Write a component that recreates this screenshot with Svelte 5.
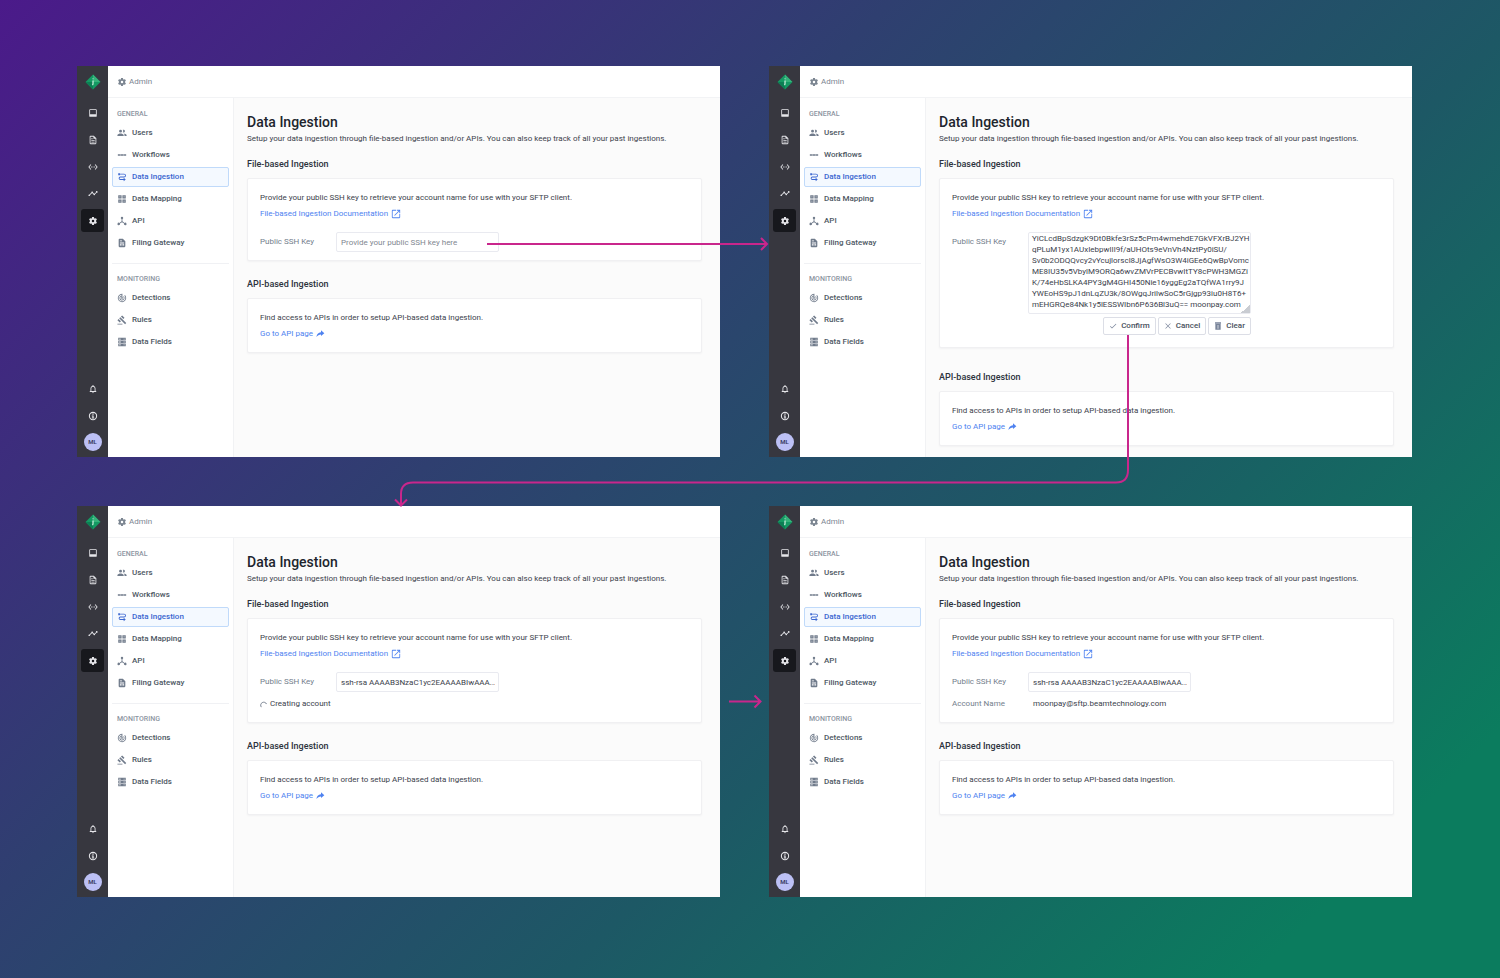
<script>
  const icons = {
    gear: "M19.14 12.94c.04-.3.06-.61.06-.94 0-.32-.02-.64-.07-.94l2.03-1.58a.49.49 0 0 0 .12-.61l-1.92-3.32a.488.488 0 0 0-.59-.22l-2.39.96c-.5-.38-1.03-.7-1.62-.94l-.36-2.54a.484.484 0 0 0-.48-.41h-3.84c-.24 0-.43.17-.47.41l-.36 2.54c-.59.24-1.13.57-1.62.94l-2.39-.96c-.22-.08-.47 0-.59.22L2.74 8.87c-.12.21-.08.47.12.61l2.03 1.58c-.05.3-.09.63-.09.94s.02.64.07.94l-2.03 1.58a.49.49 0 0 0-.12.61l1.92 3.32c.12.22.37.29.59.22l2.39-.96c.5.38 1.03.7 1.62.94l.36 2.54c.05.24.24.41.48.41h3.84c.24 0 .44-.17.47-.41l.36-2.54c.59-.24 1.13-.56 1.62-.94l2.39.96c.22.08.47 0 .59-.22l1.92-3.32c.12-.22.07-.47-.12-.61zM12 15a3 3 0 1 1 0-6 3 3 0 0 1 0 6z",
    inbox:
      "M5 3h14a2 2 0 0 1 2 2v14a2 2 0 0 1-2 2H5a2 2 0 0 1-2-2V5a2 2 0 0 1 2-2zm0 2v10h14V5z",
    file: "M14 2H6a2 2 0 0 0-2 2v16a2 2 0 0 0 2 2h12a2 2 0 0 0 2-2V8zM18 20H6V4h7v5h5zM8 8h3v2H8zM8 12h8v2H8zm0 4h8v2H8z",
    code: "M7.77 6.76 6.23 5.48.82 12l5.41 6.52 1.54-1.28L3.42 12zM7 13h2v-2H7zm10-2h-2v2h2zm-6 2h2v-2h-2zm6.77-7.52-1.54 1.28L20.58 12l-4.35 5.24 1.54 1.28L23.18 12z",
    trend:
      "M23 7a2 2 0 0 1-2.5 1.9l-3.6 3.6a2 2 0 1 1-3.8 0l-2.6-2.6a2 2 0 0 1-1 0L5 14.5a2 2 0 1 1-1.4-1.4l4.5-4.6a2 2 0 1 1 3.8 0l2.6 2.6a2 2 0 0 1 1 0l3.6-3.6A2 2 0 1 1 23 7z",
    bell: "M12 22c1.1 0 2-.9 2-2h-4c0 1.1.9 2 2 2zm6-6v-5c0-3.07-1.63-5.64-4.5-6.32V4c0-.83-.67-1.5-1.5-1.5s-1.5.67-1.5 1.5v.68C7.64 5.36 6 7.92 6 11v5l-2 2v1h16v-1zm-2 1H8v-6c0-2.48 1.51-4.5 4-4.5s4 2.02 4 4.5z",
    info: "M12 2a10 10 0 1 0 0 20 10 10 0 0 0 0-20zm0 2.500a7.500 7.500 0 1 1 0 15 7.500 7.500 0 0 1 0-15zM10.500 6h3v3h-3zM9 10.500h4.500V16H15v2H9v-2h1.500v-3.500H9z",
    users:
      "M8.5 4a3.5 3.5 0 1 0 0 7 3.5 3.5 0 0 0 0-7zm7 0c-.6 0-1 .1-1.5.3a5.5 5.5 0 0 1 0 6.4c.5.2.9.3 1.5.3a3.5 3.5 0 0 0 0-7zM1 19v-2c0-2.7 5-4 7.5-4s7.5 1.3 7.5 4v2zm17 0v-2c0-1.6-.8-2.8-2-3.7 2.5.3 7 1.5 7 3.7v2z",
    dots: "M2 10h5v1h2v-1h6v1h2v-1h5v4h-5v-1h-2v1H9v-1H7v1H2z",
    flow: "M3 3h4v1h10a4 4 0 0 1 0 9H8a2 2 0 0 0 0 4h8v-3l5 4-5 4v-3H8a4 4 0 0 1 0-8h9a2 2 0 0 0 0-5H7v2H3z",
    grid: "M3 3h8v8H3zm10 0h8v8h-8zM3 13h8v8H3zm10 0h8v8h-8zM6 6v2h2V6zm10 0v2h2V6zM6 16v2h2v-2zm10 0v2h2v-2z",
    hub: "M12 2a3 3 0 0 0-1 5.8v5L5.7 16.6A3 3 0 1 0 7 18.2L12 14.7l5 3.5a3 3 0 1 0 1.3-1.6L13 12.8v-5A3 3 0 0 0 12 2z",
    page: "M14 2H6a2 2 0 0 0-2 2v16a2 2 0 0 0 2 2h12a2 2 0 0 0 2-2V8zM7 6h5v2H7zm0 5h10v2H7zm0 4h4v3H7zm6 0h4v3h-4z",
    radar:
      "M19.07 4.93l-1.41 1.41A8 8 0 1 1 11 4.07v2.02A6 6 0 1 0 16.24 7.76l-1.41 1.41A4 4 0 1 1 11 8.14v2.14a2 2 0 1 0 2 0V2h-1a10 10 0 1 0 7.07 2.93z",
    gavel:
      "M1 21h12v2H1zM5.24 8.07l2.83-2.83 14.14 14.14-2.83 2.83zM12.32 1l5.66 5.66-2.83 2.83-5.66-5.66zM3.83 9.48l5.66 5.66-2.83 2.83L1 12.31z",
    fields:
      "M3 2h18v6H3zm0 7h18v6H3zm0 7h18v6H3zM5 4v2h4V4zm0 7v2h4v-2zm0 7v2h4v-2zM16 4v2h2V4zm0 7v2h2v-2zm0 7v2h2v-2z",
    launch:
      "M20 20H4V4h8V2H4a2 2 0 0 0-2 2v16a2 2 0 0 0 2 2h16a2 2 0 0 0 2-2v-8h-2zM14 2v2h4.5L7.7 14.8l1.5 1.5L20 5.5V10h2V2z",
    share: "M12 3l8 7-8 7v-4C7 13 4 15 1 19c1-6 4-10 11-11z",
    check: "M9 16.6 4.4 12 3 13.4l6 6L22 6.4 20.6 5z",
    cross:
      "M20 5.2 18.8 4 12 10.8 5.2 4 4 5.2 10.8 12 4 18.8 5.2 20 12 13.2 18.8 20 20 18.8 13.2 12z",
    trash: "M3 1h18v4H3zM4 6h16v17H4zM9 9v11h1V9zm5 0v11h1V9z",
  };

  const rail = ["inbox", "file", "code", "trend", "gear"];

  const general = [
    { icon: "users", label: "Users" },
    { icon: "dots", label: "Workflows" },
    { icon: "flow", label: "Data Ingestion", active: true },
    { icon: "grid", label: "Data Mapping" },
    { icon: "hub", label: "API" },
    { icon: "page", label: "Filing Gateway" },
  ];

  const monitoring = [
    { icon: "radar", label: "Detections" },
    { icon: "gavel", label: "Rules" },
    { icon: "fields", label: "Data Fields" },
  ];

  const screens = ["empty", "editing", "creating", "done"];

  const savedKey = "ssh-rsa AAAAB3NzaC1yc2EAAAABIwAAA...";

  const longKey = [
    "YiCLcdBpSdzgK9Dt0Bkfe3rSz5cPm4wmehdE7GkVFXrBJ2YH",
    "qPLuM1yx1AUxIebpwlIl9f/aUHOts9eVnVh4NztPy0iSU/",
    "Sv0b2ODQQvcy2vYcujlorscl8JjAgfWsO3W4iGEe6QwBpVomc",
    "ME8IU35v5VbylM9ORQa6wvZMVrPECBvwItTY8cPWH3MGZi",
    "K/74eHbSLKA4PY3gM4GHI450Nie16yggEg2aTQfWA1rry9J",
    "YWEoHS9pJ1dnLqZU3k/8OWgqJrilwSoC5rGjgp93iu0H8T6+",
    "mEHGRQe84Nk1y5lESSWIbn6P636Bl3uQ== moonpay.com",
  ].join("\n");
</script>

{#snippet icon(name)}
  <svg class="icon" viewBox="0 0 24 24" aria-hidden="true">
    <path d={icons[name]} fill="currentColor" fill-rule="evenodd" />
  </svg>
{/snippet}

{#snippet menu(title, items)}
  <h4>{title}</h4>
  <ul>
    {#each items as item}
      <li>
        <a href="#{item.icon}" class:active={item.active}>
          {@render icon(item.icon)}{item.label}
        </a>
      </li>
    {/each}
  </ul>
{/snippet}

<div class="board">
  {#each screens as state}
    <article class="screen">
      <div class="rail">
        <svg class="logo" viewBox="0 0 30 30" aria-hidden="true">
          <path d="M15 1 29 15 15 29 1 15z" fill="#149a63" />
          <path d="M15 1 29 15H15z" fill="#35b27b" />
          <path d="M1 15h14v14z" fill="#0c7f54" />
          <path d="M15 12v6q0 2-1 3" fill="none" stroke="#e8fff4" stroke-width="2" />
          <circle cx="15" cy="9" r="1" fill="#e8fff4" />
        </svg>
        {#each rail as name}
          <button class="rail-btn" class:current={name === "gear"} aria-label={name}>
            {@render icon(name)}
          </button>
        {/each}
        <div class="rail-bottom">
          <button class="rail-btn" aria-label="Notifications">{@render icon("bell")}</button>
          <button class="rail-btn" aria-label="Info">{@render icon("info")}</button>
          <div class="avatar">ML</div>
        </div>
      </div>

      <div class="page">
        <header>{@render icon("gear")}Admin</header>
        <div class="body">
          <nav>
            {@render menu("GENERAL", general)}
            <hr />
            {@render menu("MONITORING", monitoring)}
          </nav>

          <main>
            <h1>Data Ingestion</h1>
            <p class="lead">
              Setup your data ingestion through file-based ingestion and/or APIs. You can also keep
              track of all your past ingestions.
            </p>

            <section class={state}>
              <h2>File-based Ingestion</h2>
              <div class="card">
                <p>
                  Provide your public SSH key to retrieve your account name for use with your SFTP
                  client.
                </p>
                <a class="link" href="#docs">
                  File-based Ingestion Documentation {@render icon("launch")}
                </a>
                <div class="field">
                  <label for="key-{state}">Public SSH Key</label>
                  {#if state === "editing"}
                    <div class="editor">
                      <textarea id="key-{state}" wrap="off" spellcheck="false" value={longKey}
                      ></textarea>
                      <div class="actions">
                        <button>{@render icon("check")}Confirm</button>
                        <button>{@render icon("cross")}Cancel</button>
                        <button>{@render icon("trash")}Clear</button>
                      </div>
                    </div>
                  {:else}
                    <input
                      id="key-{state}"
                      type="text"
                      placeholder="Provide your public SSH key here"
                      value={state === "empty" ? "" : savedKey}
                    />
                  {/if}
                </div>
                {#if state === "creating"}
                  <div class="status">
                    <svg class="spinner" viewBox="0 0 16 16" aria-hidden="true">
                      <path d="M3 14A7 7 0 1 1 15 7" />
                    </svg>
                    Creating account
                  </div>
                {:else if state === "done"}
                  <div class="account">
                    <span class="name">Account Name</span>
                    <span>moonpay@sftp.beamtechnology.com</span>
                  </div>
                {/if}
              </div>
            </section>

            <section>
              <h2>API-based Ingestion</h2>
              <div class="card">
                <p>Find access to APIs in order to setup API-based data ingestion.</p>
                <a class="link" href="#api">Go to API page {@render icon("share")}</a>
              </div>
            </section>
          </main>
        </div>
      </div>
    </article>
  {/each}

  <!-- flow arrows between the screens -->
  <svg class="arrows" viewBox="0 0 1500 978" preserveAspectRatio="none" aria-hidden="true">
    <path d="M487 244H767M761 238l6 6-6 6" />
    <path d="M1128 335V470Q1128 482.5 1116 482.5H413Q401 482.5 401 494V505M395 499.5l6 6 6-6" />
    <path d="M729 701.5H760M754.5 695.5l6 6-6 6" />
  </svg>
</div>

<style>
  :global(body) {
    margin: 0;
  }

  .board {
    position: relative;
    box-sizing: border-box;
    min-height: 100vh;
    padding: 66px 88px 81px 77px;
    display: grid;
    grid-template-columns: 1fr 1fr;
    grid-auto-rows: 1fr;
    gap: 49px;
    background: linear-gradient(135deg, #4b1a8a 0%, #2f3f70 36%, #1d5865 62%, #0b7c5e 90%);
    font-family: Roboto, "Noto Sans", sans-serif;
    font-size: 8px;
    line-height: 12px;
    color: #3b424c;
  }

  .board * {
    box-sizing: border-box;
  }

  h1,
  h2,
  h4,
  p,
  ul {
    margin: 0;
    padding: 0;
  }

  button,
  input,
  textarea {
    font: inherit;
    color: inherit;
  }

  .icon {
    width: 10px;
    height: 10px;
    flex: none;
  }

  .screen {
    display: flex;
    min-width: 0;
    background: #fff;
  }

  .rail {
    width: 31px;
    flex: none;
    background: #37373f;
    color: #e6e6ea;
    display: flex;
    flex-direction: column;
    align-items: center;
    padding: 8px 0 6px;
    gap: 4px;
  }

  .logo {
    width: 16px;
    height: 16px;
    margin-bottom: 7px;
  }

  .rail-btn {
    width: 23px;
    height: 23px;
    padding: 0;
    border: 0;
    border-radius: 3px;
    background: none;
    display: flex;
    align-items: center;
    justify-content: center;
  }

  .rail-btn.current {
    background: #17181d;
  }

  .rail-bottom {
    margin-top: auto;
    display: flex;
    flex-direction: column;
    align-items: center;
    gap: 4px;
  }

  .avatar {
    width: 18px;
    height: 18px;
    margin-top: 2px;
    border-radius: 50%;
    background: #bcc0f5;
    color: #33365c;
    font-size: 6px;
    font-weight: 600;
    line-height: 18px;
    text-align: center;
  }

  .page {
    flex: 1;
    min-width: 0;
    display: flex;
    flex-direction: column;
  }

  header {
    height: 32px;
    padding: 0 9px;
    display: flex;
    align-items: center;
    gap: 2px;
    border-bottom: 1px solid #f2f3f5;
    color: #7b8591;
  }

  .body {
    flex: 1;
    display: flex;
  }

  nav {
    width: 126px;
    flex: none;
    padding: 10px 4px;
    border-right: 1px solid #f1f2f4;
  }

  h4 {
    padding-left: 5px;
    color: #8c95a1;
    font-size: 7px;
    font-weight: 500;
    line-height: 12px;
  }

  ul {
    list-style: none;
    display: grid;
    gap: 2px;
    margin-top: 3px;
  }

  nav a {
    height: 20px;
    padding: 0 4px;
    display: flex;
    align-items: center;
    gap: 5px;
    border: 1px solid transparent;
    border-radius: 2px;
    color: #4d5763;
    font-weight: 500;
    text-decoration: none;
  }

  nav a .icon {
    color: #707b8b;
  }

  nav a.active,
  nav a.active .icon {
    color: #3a66d0;
  }

  nav a.active {
    background: #f4f9ff;
    border-color: #c0dafa;
  }

  hr {
    margin: 10px 0 9px;
    border: 0;
    border-top: 1px solid #f0f1f4;
  }

  main {
    flex: 1;
    min-width: 0;
    padding: 15px 18px 10px 13px;
    background: #fbfbfb;
  }

  h1 {
    color: #20252d;
    font-size: 14px;
    font-weight: 500;
    line-height: 18px;
  }

  .lead {
    margin-top: 2px;
  }

  section {
    margin-top: 17px;
  }

  .lead + section {
    margin-top: 13px;
  }

  .editing + section {
    margin-top: 23px;
  }

  h2 {
    color: #2c323b;
    font-size: 9px;
    font-weight: 500;
    line-height: 12px;
  }

  .card {
    margin-top: 8px;
    padding: 13px 12px 12px;
    background: #fff;
    border: 1px solid #f0f0f2;
    border-radius: 2px;
    box-shadow: 0 1px 2px rgba(30, 35, 50, 0.04);
  }

  .empty .card {
    padding-bottom: 8px;
  }

  .link {
    margin-top: 4px;
    display: flex;
    align-items: center;
    gap: 3px;
    color: #4e82f0;
    text-decoration: none;
  }

  .field {
    margin-top: 12px;
    display: flex;
    align-items: flex-start;
  }

  label,
  .name {
    width: 76px;
    flex: none;
    color: #737e8c;
  }

  label {
    line-height: 20px;
  }

  input,
  textarea {
    margin: 0;
    border: 1px solid #e9eaf0;
    border-radius: 2px;
    background: #fff;
    outline: none;
  }

  input {
    width: 163px;
    height: 20px;
    padding: 0 3px 0 4px;
  }

  input::placeholder {
    color: #7f8791;
    opacity: 1;
  }

  textarea {
    display: block;
    width: 223px;
    height: 82px;
    padding: 0 3px;
    line-height: 11px;
    overflow: hidden;
  }

  textarea::-webkit-resizer {
    background: linear-gradient(135deg, transparent 70%, #c9ccd2 70%);
  }

  .actions {
    margin-top: 3px;
    display: flex;
    justify-content: flex-end;
    gap: 2px;
  }

  .actions button {
    height: 18px;
    padding: 0 5px;
    display: flex;
    align-items: center;
    gap: 4px;
    background: #fff;
    border: 1px solid #dcdee6;
    border-radius: 2px;
    color: #48515d;
    font-weight: 500;
  }

  .actions .icon {
    width: 8px;
    height: 8px;
    color: #79849a;
  }

  .status,
  .account {
    margin-top: 6px;
    display: flex;
    align-items: center;
  }

  .status {
    gap: 3px;
  }

  .account span:last-child {
    padding-left: 5px;
  }

  .spinner {
    width: 7px;
    height: 7px;
  }

  .spinner path {
    fill: none;
    stroke: #6a7585;
    stroke-width: 2;
  }

  .arrows {
    position: absolute;
    inset: 0;
    width: 100%;
    height: 100%;
    pointer-events: none;
  }

  .arrows path {
    fill: none;
    stroke: #c9268c;
    stroke-width: 2;
  }
</style>
